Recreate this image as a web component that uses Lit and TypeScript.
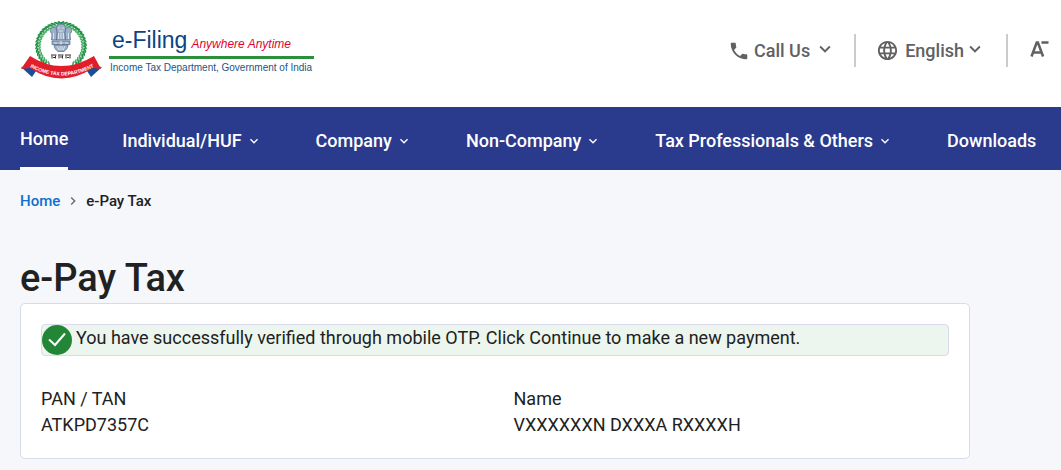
import { LitElement, html, css, svg } from "lit";
import { customElement, property } from "lit/decorators.js";

const wreath = Array.from({ length: 36 }, (_, i) => {
  const a = ((i * 8.2 - 233.5) * Math.PI) / 180;
  const x = 41 + Math.cos(a) * 23;
  const y = 25 + Math.sin(a) * 22;
  const turn = (a * 180) / Math.PI + 90;
  const lean = x > 41 ? -32 : 32;
  return svg`<g transform="translate(${x.toFixed(1)} ${y.toFixed(1)}) rotate(${(turn + lean).toFixed(0)})">
    <ellipse rx="2.8" ry="1" cy="-1.5" fill="#23914a"/>
    <ellipse rx="2.4" ry=".9" cy="1.600" fill="#4fae66"/>
  </g>`;
});

const emblem = svg`
<svg class="emblem" width="84" height="60" viewBox="0 0 84 60" role="img" aria-label="Income Tax Department emblem">
  ${wreath}
  <g fill="#9db0c8" stroke="#4c6788" stroke-width=".7">
    <path d="M36 8c0-3 2-5 5-5s5 2 5 5l-1 4 1 7h-10l1-7z"/>
    <path d="M36 7c-4-2-6 0-5.500 4l1.500 2-.5 6h5l.5-8z"/>
    <path d="M46 7c4-2 6 0 5.500 4l-1.500 2 .5 6h-5l-.5-8z"/>
    <path d="M32 20h18v3.500h-18z"/>
    <path d="M34 24h14c0 3-2 5-4 6.500h-6c-2-1.500-4-3.500-4-6.500z"/>
  </g>
  <g stroke="#e8eef5" stroke-width=".8" fill="none">
    <path d="M38 7h2M42 7h2M39 10h4M38.500 12v6M41 12v6M43.500 12v6M33.500 12v6M48.500 12v6M34 22h3M45 22h3"/>
    <circle cx="41" cy="21.800" r="1.200"/>
    <path d="M37 25l2 4M40 25v4M42 25v4M45 25l-2 4"/>
  </g>
  <path d="M31 34h5.500M38 34h5.500M45 34h6M32 34.500v3M35.500 34.500v3M39 34.500v3M42.500 34.500v3M46 34.500v3M50 34.500v3M33 36.500h2M40 36h2M47 36.500h2" stroke="#333" stroke-width="1" fill="none"/>
  <path d="M1 46l11 10 4-6-6-5zM82 46l-11 10-4-6 6-5z" fill="#16509b"/>
  <path d="M10 35q31 20 64 0l7 13-8-1q-32 21-63 0l-9 1z" fill="#e31e2b"/>
  <path id="ribbon" d="M5 43q36 23 74 0" fill="none"/>
  <text class="ribbon"><textPath href="#ribbon" startOffset="50%" text-anchor="middle">INCOME TAX DEPARTMENT</textPath></text>
</svg>`;

const paths: Record<string, string> = {
  phone: "M6.620 10.790c1.440 2.830 3.760 5.140 6.590 6.590l2.200-2.200c.27-.27.67-.36 1.020-.24 1.120.37 2.330.57 3.570.57.55 0 1 .45 1 1V20c0 .55-.45 1-1 1-9.390 0-17-7.610-17-17 0-.55.45-1 1-1h3.500c.55 0 1 .45 1 1 0 1.250.2 2.450.57 3.570.11.35.03.74-.25 1.020z",
  globe: "M11.990 2C6.470 2 2 6.480 2 12s4.470 10 9.990 10C17.520 22 22 17.520 22 12S17.520 2 11.990 2zm6.930 6h-2.950c-.32-1.250-.78-2.450-1.380-3.560 1.840.63 3.370 1.910 4.330 3.560zM12 4.040c.83 1.200 1.480 2.530 1.910 3.960h-3.820c.43-1.430 1.080-2.760 1.910-3.960zM4.260 14C4.100 13.360 4 12.690 4 12s.1-1.360.26-2h3.380c-.08.66-.14 1.320-.14 2s.06 1.340.14 2zm.82 2h2.950c.32 1.250.78 2.450 1.380 3.560-1.840-.63-3.370-1.900-4.330-3.560zm2.950-8H5.080c.96-1.660 2.490-2.930 4.330-3.560C8.810 5.550 8.350 6.750 8.030 8zM12 19.960c-.83-1.200-1.480-2.530-1.910-3.960h3.820c-.43 1.430-1.080 2.760-1.910 3.960zM14.340 14H9.660c-.09-.66-.16-1.320-.16-2s.07-1.350.16-2h4.680c.09.65.16 1.320.16 2s-.07 1.340-.16 2zm.25 5.560c.6-1.110 1.060-2.310 1.380-3.560h2.950c-.96 1.650-2.490 2.930-4.330 3.560zM16.360 14c.08-.66.14-1.320.14-2s-.06-1.340-.14-2h3.380c.16.64.26 1.310.26 2s-.1 1.360-.26 2z",
  down: "M7.410 8.590 12 13.170l4.590-4.580L18 10l-6 6-6-6z",
  right: "M8.590 16.590 13.170 12 8.590 7.410 10 6l6 6-6 6z",
};

const icon = (name: string, size: number) =>
  html`<svg class="icon" width=${size} height=${size} viewBox="0 0 24 24" fill="currentColor" aria-hidden="true"><path d=${paths[name]}/></svg>`;

@customElement("site-header")
class SiteHeader extends LitElement {
  static styles = css`
    :host { display: block; background: #fff; }
    .bar { display: flex; align-items: center; justify-content: space-between; height: 107px; box-sizing: border-box; padding: 0 11px 6px 20px; }
    .brand { display: flex; align-items: center; gap: 5px; text-decoration: none; color: #1c5585; }
    .ribbon { font: bold 5px "Liberation Sans", Arial, sans-serif; fill: #fff; }
    .words { display: flex; flex-direction: column; font-family: "Liberation Sans", Arial, sans-serif; white-space: nowrap; }
    .top { display: flex; align-items: baseline; gap: 4px; padding: 3px 3px 0; line-height: 24px; border-bottom: 3px solid #2b8f3c; }
    .name { font-size: 23px; color: #0b4486; }
    .motto { font-size: 12px; font-style: italic; color: #e4032e; }
    .dept { font-size: 10px; line-height: 18px; padding: 0 2px 0 1px; }
    .tools { display: flex; align-items: center; color: #616161; }
    button { display: flex; align-items: center; border: 0; background: none; padding: 0; color: inherit; font: 500 18px/24px Roboto, sans-serif; cursor: pointer; white-space: nowrap; }
    .icon { flex: none; }
    .call { gap: 4px; }
    .call .caret { margin-right: -2px; }
    .lang { gap: 6px; }
    .lang .caret { margin-left: -6px; }
    .caret { display: flex; padding-bottom: 4px; }
    .rule { width: 2px; height: 33px; background: #ccc; margin: 0 20px; }
  `;
  render() {
    return html`<header class="bar">
      <a class="brand" href="#">
        ${emblem}
        <span class="words">
          <span class="top"><span class="name">e-Filing</span><span class="motto">Anywhere Anytime</span></span>
          <span class="dept">Income Tax Department, Government of India</span>
        </span>
      </a>
      <div class="tools">
        <button class="call">${icon("phone", 22)}<span>Call Us</span><span class="caret">${icon("down", 22)}</span></button>
        <span class="rule"></span>
        <button class="lang">${icon("globe", 23)}<span>English</span><span class="caret">${icon("down", 22)}</span></button>
        <span class="rule"></span>
        <button aria-label="Decrease text size">
          <svg width="22" height="22" viewBox="0 0 22 22" fill="none" stroke="#616161" stroke-width="2.500" aria-hidden="true"><path d="M3.500 16.500 8.700 2.500h1.200l5.200 14M5.500 12.500h7.600M13.500 2.500h7"/></svg>
        </button>
      </div>
    </header>`;
  }
}

@customElement("site-nav")
class SiteNav extends LitElement {
  static styles = css`
    :host { display: block; background: #2a3a8c; }
    nav { display: flex; gap: 54px; height: 63px; padding: 0 20px; overflow: hidden; }
    a { display: flex; align-items: center; gap: 4px; flex: none; box-sizing: border-box; padding-top: 4px; color: #fff; font: 500 18px/24px Roboto, sans-serif; text-decoration: none; white-space: nowrap; }
    .active { padding-top: 3px; border-bottom: 3px solid #fff; }
  `;
  @property({ attribute: false }) items: { label: string; menu?: boolean; active?: boolean }[] = [
    { label: "Home", active: true },
    { label: "Individual/HUF", menu: true },
    { label: "Company", menu: true },
    { label: "Non-Company", menu: true },
    { label: "Tax Professionals & Others", menu: true },
    { label: "Downloads" },
  ];
  render() {
    return html`<nav>${this.items.map((i) => html`<a href="#" class=${i.active ? "active" : ""}>${i.label}${i.menu ? icon("down", 16) : ""}</a>`)}</nav>`;
  }
}

@customElement("app-root")
class AppRoot extends LitElement {
  static styles = css`
    :host { display: block; min-height: 100vh; background: #f5f7fb; color: #212121; font-family: Roboto, sans-serif; overflow: hidden; }
    main { padding: 20px 20px 12px; }
    .crumbs { display: flex; align-items: center; gap: 5px; font-size: 15px; line-height: 22px; font-weight: 500; }
    .crumbs a { color: #0d6fd1; text-decoration: none; }
    .crumbs .icon { color: #666; }
    h1 { margin: 42px 0 0; font-size: 38px; line-height: 48px; font-weight: 500; }
    .card { box-sizing: border-box; max-width: 950px; margin-top: 1px; padding: 20px; background: #fff; border: 1px solid #d9daea; border-radius: 5px; }
    .notice { display: flex; align-items: center; gap: 4px; border: 1px solid #d9daea; border-radius: 4px; background: #ecf6ee; font-size: 18px; line-height: 26px; }
    .notice svg { flex: none; }
    .notice p { margin: 0; padding-bottom: 4px; }
    dl { display: grid; grid-template-columns: 1fr 1fr; gap: 37px; margin: 30px 0 0; font-size: 18px; line-height: 26px; }
    dd { margin: 0; }
  `;
  render() {
    return html`
      <site-header></site-header>
      <site-nav></site-nav>
      <main>
        <div class="crumbs"><a href="#">Home</a>${icon("right", 16)}<span>e-Pay Tax</span></div>
        <h1>e-Pay Tax</h1>
        <section class="card">
          <div class="notice" role="status">
            <svg width="30" height="30" viewBox="0 0 30 30" aria-hidden="true"><circle cx="15" cy="15" r="15" fill="#238636"/><path d="M7 14.500l6 5.500L23 8.500" fill="none" stroke="#fff" stroke-width="2"/></svg>
            <p>You have successfully verified through mobile OTP. Click Continue to make a new payment.</p>
          </div>
          <dl>
            <div><dt>PAN / TAN</dt><dd>ATKPD7357C</dd></div>
            <div><dt>Name</dt><dd>VXXXXXXN DXXXA RXXXXH</dd></div>
          </dl>
        </section>
      </main>`;
  }
}
